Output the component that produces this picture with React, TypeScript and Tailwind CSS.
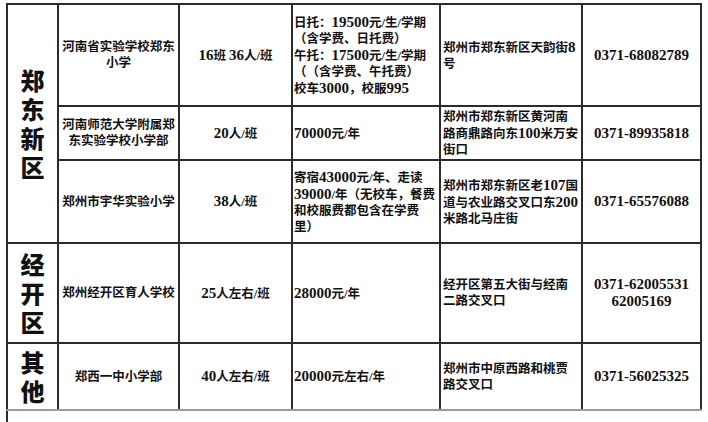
import React from 'react';

// digit runs render wider (bold serif numerals); full-width punctuation keeps a full em box
const fmt = (s: string) =>
  s.split(/([0-9][0-9-]*|[（）、，：])/).map((p, i) => {
    if (/^[0-9]/.test(p))
      return (
        <span key={i} className="text-[15px]">
          {p}
        </span>
      );
    if (p === '（' || p === '）')
      return (
        <span key={i} className="inline-block w-[12.5px] text-center">
          {p}
        </span>
      );
    if (/^[、，：]$/.test(p))
      return (
        <span key={i} className="inline-block w-[12.5px] text-left">
          {p}
        </span>
      );
    return <React.Fragment key={i}>{p}</React.Fragment>;
  });

const Lines = ({ lines }: { lines: string[] }) => (
  <>
    {lines.map((l, i) => (
      <div key={i} className="whitespace-nowrap">
        {fmt(l)}
      </div>
    ))}
  </>
);

const cell = 'border-2 border-[#2b2b2b] align-middle leading-[16px]';

type Row = {
  school: string[];
  size: string[];
  fee: string[];
  addr: string[];
  tel: string[];
  h: string;
  topGray?: boolean;
};

const rows: Row[] = [
  {
    school: ['河南省实验学校郑东', '小学'],
    size: ['16班 36人/班'],
    fee: ['日托：19500元/生/学期', '（含学费、日托费）', '午托：17500元/生/学期', '（（含学费、午托费）', '校车3000，校服995'],
    addr: ['郑州市郑东新区天韵街8', '号'],
    tel: ['0371-68082789'],
    h: 'h-[102px]',
  },
  {
    school: ['河南师范大学附属郑', '东实验学校小学部'],
    size: ['20人/班'],
    fee: ['70000元/年'],
    addr: ['郑州市郑东新区黄河南', '路商鼎路向东100米万安', '街口'],
    tel: ['0371-89935818'],
    h: 'h-[54px]',
  },
  {
    school: ['郑州市宇华实验小学'],
    size: ['38人/班'],
    fee: ['寄宿43000元/年、走读', '39000/年（无校车，餐费', '和校服费都包含在学费', '里）'],
    addr: ['郑州市郑东新区老107国', '道与农业路交叉口东200', '米路北马庄街'],
    tel: ['0371-65576088'],
    h: 'h-[83px]',
    topGray: true,
  },
  {
    school: ['郑州经开区育人学校'],
    size: ['25人左右/班'],
    fee: ['28000元/年'],
    addr: ['经开区第五大街与经南', '二路交叉口'],
    tel: ['0371-62005531', '62005169'],
    h: 'h-[100px]',
  },
  {
    school: ['郑西一中小学部'],
    size: ['40人左右/班'],
    fee: ['20000元左右/年'],
    addr: ['郑州市中原西路和桃贾', '路交叉口'],
    tel: ['0371-56025325'],
    h: 'h-[67px]',
  },
];

const regions: { name: string[]; span: number; at: number }[] = [
  { name: ['郑', '东', '新', '区'], span: 3, at: 0 },
  { name: ['经', '开', '区'], span: 1, at: 3 },
  { name: ['其', '他'], span: 1, at: 4 },
];

export default function App() {
  return (
    <div className="w-[708px] h-[422px] overflow-hidden bg-white pt-[3px] pl-[6px] text-[12.5px] font-bold text-[#111] font-['Liberation_Serif','Noto_Sans_CJK_SC',serif]">
      <table className="table-fixed border-collapse w-[694px]">
        <colgroup>
          <col className="w-[51px]" />
          <col className="w-[121px]" />
          <col className="w-[113px]" />
          <col className="w-[148px]" />
          <col className="w-[142px]" />
          <col className="w-[119px]" />
        </colgroup>
        <tbody>
          {rows.map((r, i) => {
            const region = regions.find((g) => g.at === i);
            const top = r.topGray ? 'border-t-[#9a9a9a]' : '';
            const last = i === rows.length - 1 ? 'border-b-[#9a9a9a]' : '';
            return (
              <tr key={i} className={r.h}>
                {region && (
                  <td
                    rowSpan={region.span}
                    className={`${cell} ${last} text-[24px] font-['Noto_Sans_CJK_SC',sans-serif] font-black`}
                  >
                    <div className="flex flex-col items-center gap-[5px] leading-[24px]">
                      {region.name.map((c) => (
                        <div key={c}>{c}</div>
                      ))}
                    </div>
                  </td>
                )}
                <td className={`${cell} ${top} ${last} text-center`}>
                  <Lines lines={r.school} />
                </td>
                <td className={`${cell} ${top} ${last} text-center`}>
                  <Lines lines={r.size} />
                </td>
                <td className={`${cell} ${top} ${last} pl-[1px]`}>
                  <Lines lines={r.fee} />
                </td>
                <td className={`${cell} ${top} ${last} pl-[2px]`}>
                  <Lines lines={r.addr} />
                </td>
                <td className={`${cell} ${top} ${last} text-center`}>
                  <Lines lines={r.tel} />
                </td>
              </tr>
            );
          })}
        </tbody>
      </table>
      <div className="h-[14px] border-l-2 border-[#2b2b2b]" />
    </div>
  );
}
